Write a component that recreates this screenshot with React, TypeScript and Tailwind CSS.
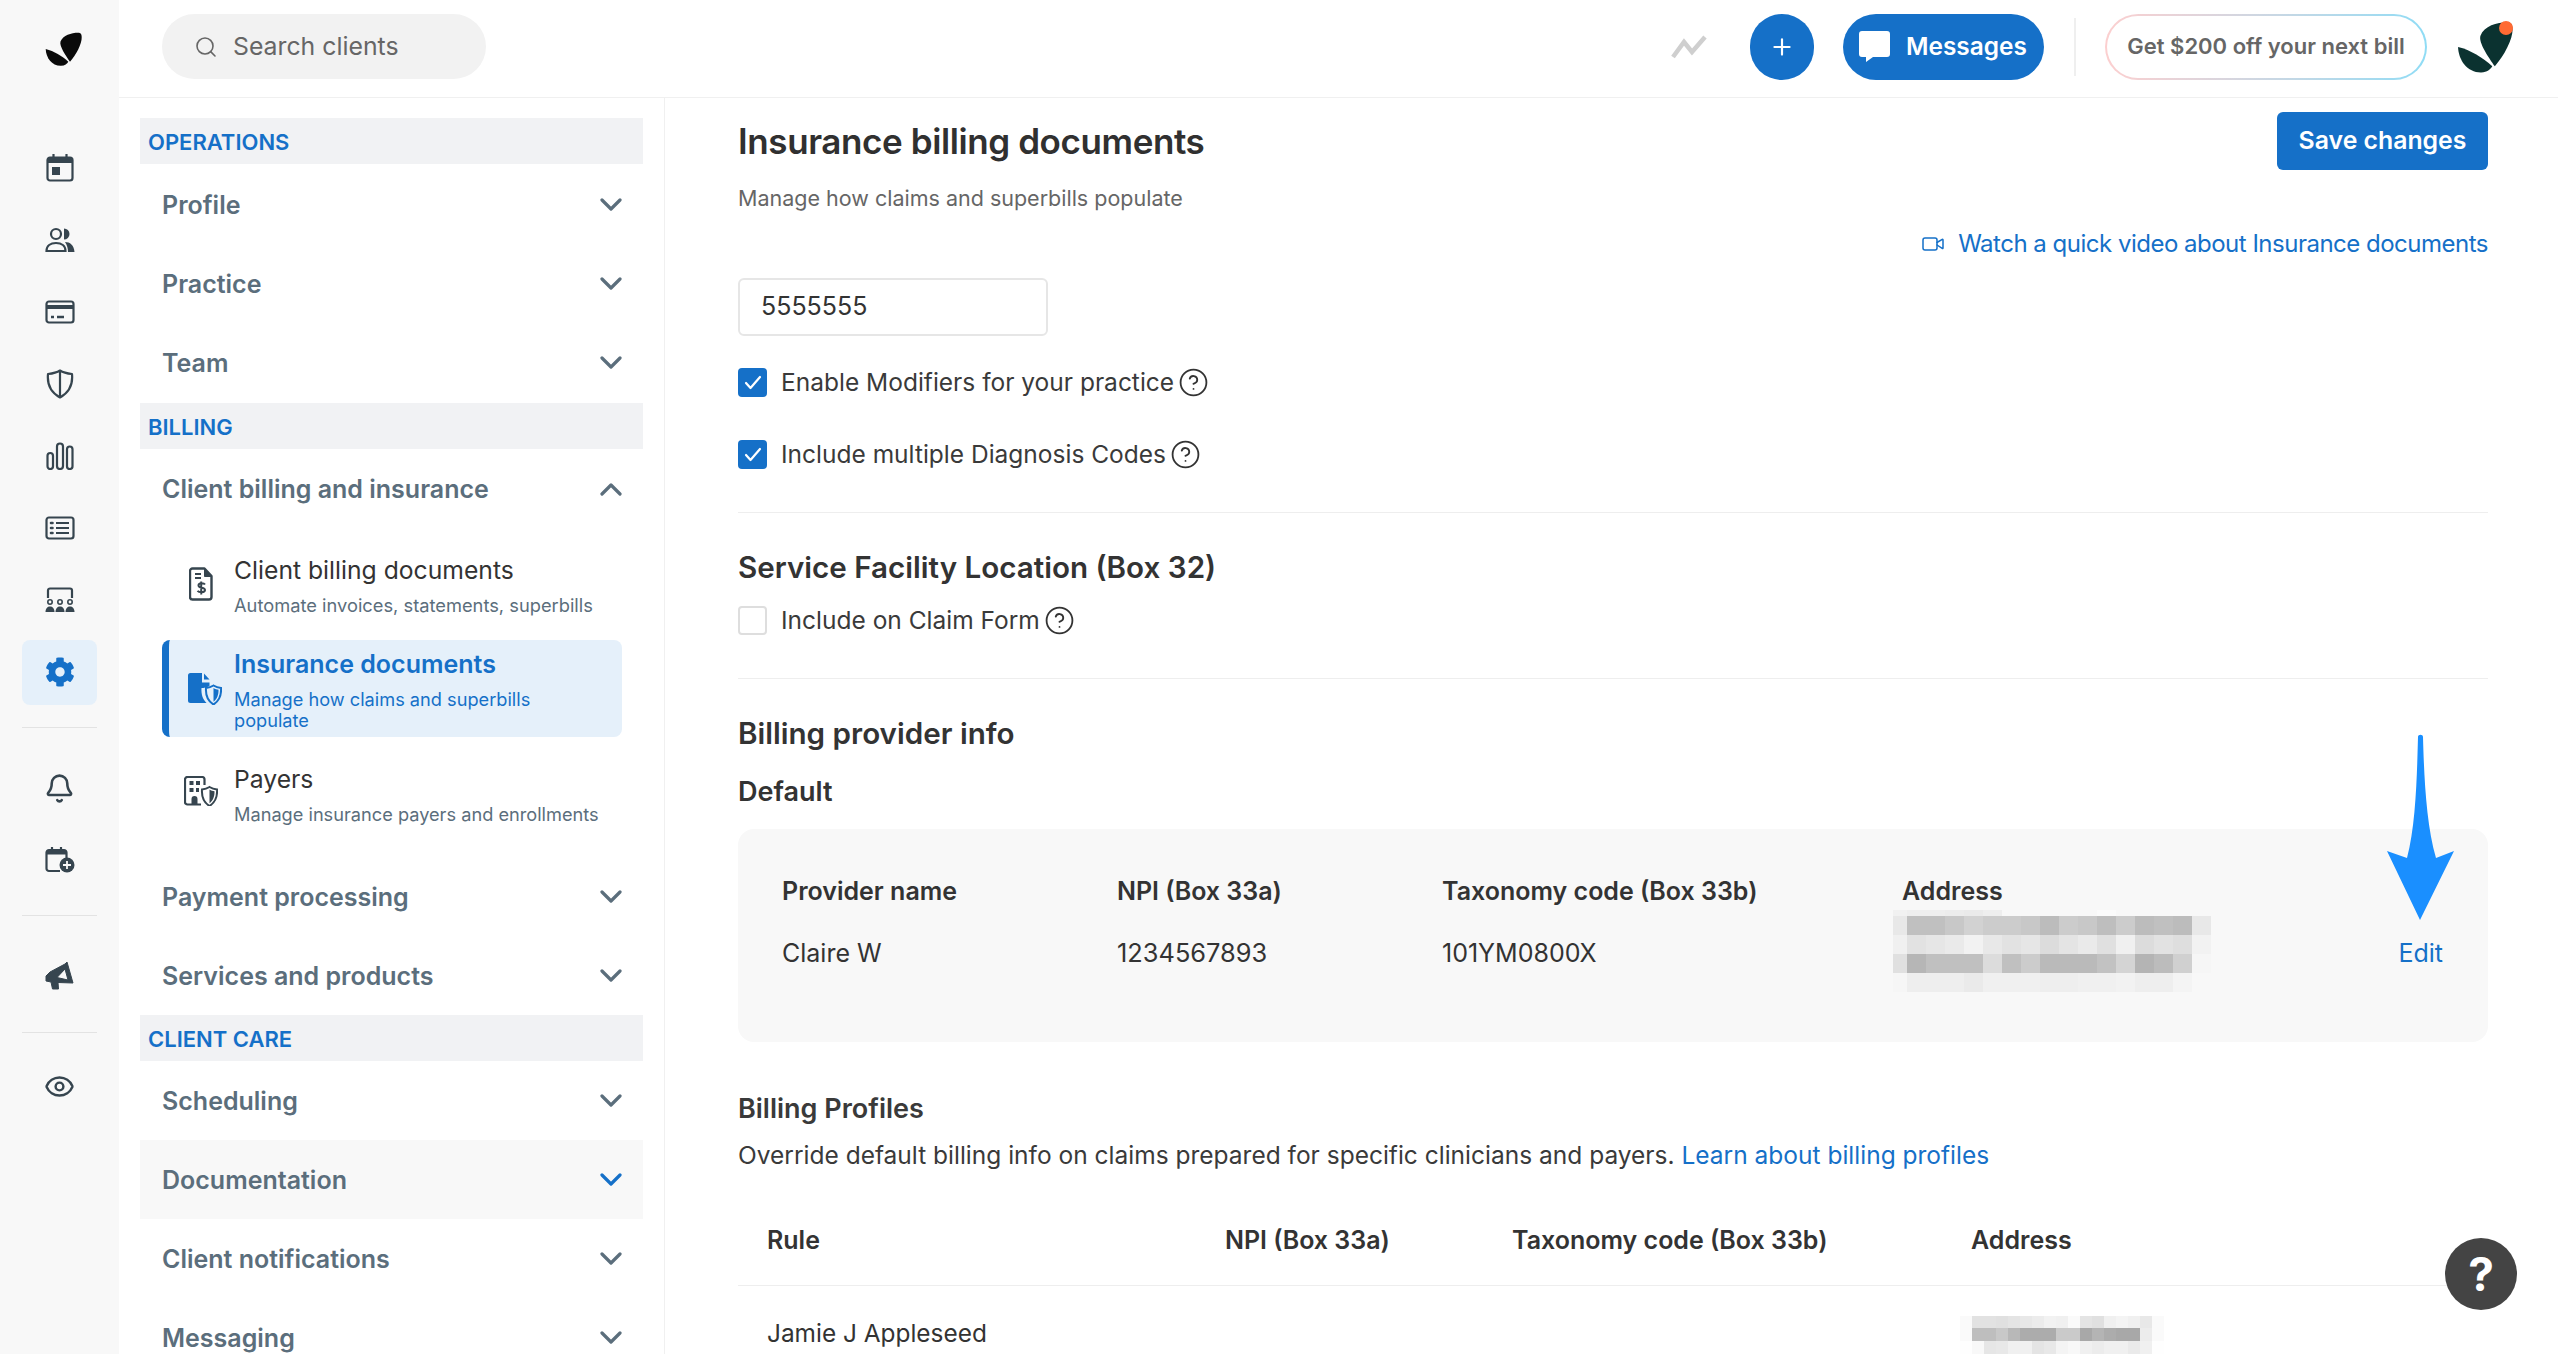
import { Bell, CircleHelp, Eye, Plus, Search, Video } from "lucide-react";
import { FaCog } from "react-icons/fa";

const INK = "#36454f";

function Chevron({ up, blue }: { up?: boolean; blue?: boolean }) {
  return (
    <svg width="22" height="14" viewBox="0 0 22 14" fill="none" stroke={blue ? "#1570c8" : "#5b6e7c"} strokeWidth="3.2" strokeLinecap="round" strokeLinejoin="round">
      <polyline points={up ? "2,12 11,3 20,12" : "2,2 11,11 20,2"} />
    </svg>
  );
}

function Logo({ color, width, height }: { color: string; width: number; height: number }) {
  return (
    <svg width={width} height={height} viewBox="0 0 37 34" fill={color}>
      <path d="M34 .7C27 .5 18 3 15.500 9.500 14 14 21 24 25 29.700 31 23 37 12 36.700 5 36.600 2.500 36 1 34 .7Z" />
      <path d="M.7 17C9 19 17 24 23.300 29.700 22 32 20 33.500 16 33.800 7 34 1 26 .7 17Z" />
    </svg>
  );
}

function CalendarIcon() {
  return (
    <svg width="28" height="28" viewBox="0 0 28 28" fill="none" stroke={INK} strokeWidth="2.2">
      <rect x="1.5" y="3.5" width="25" height="23" rx="2.5" />
      <rect x="2" y="4" width="24" height="5" fill={INK} stroke="none" />
      <path d="M7.5 0.5v4M20.5 0.5v4" strokeLinecap="round" />
      <rect x="6" y="13" width="8" height="8" fill={INK} stroke="none" />
    </svg>
  );
}

function PeopleIcon() {
  return (
    <svg width="30" height="26" viewBox="0 0 30 26" fill="none" stroke={INK} strokeWidth="2.2">
      <circle cx="11" cy="7" r="5" />
      <path d="M1.5 24c0-5 4-8 9.500-8s9.500 3 9.500 8Z" />
      <path d="M19 1.500a5.500 5.500 0 0 1 0 11Z" fill={INK} stroke="none" />
      <path d="M20 15c5 0 9 3 9.500 10H23c0-4-1-7-3-10Z" fill={INK} stroke="none" />
    </svg>
  );
}

function CardIcon() {
  return (
    <svg width="30" height="24" viewBox="0 0 30 24" fill="none" stroke={INK} strokeWidth="2.2">
      <rect x="1.500" y="1.500" width="27" height="21" rx="2.500" />
      <rect x="2" y="5" width="26" height="4" fill={INK} stroke="none" />
      <path d="M6 17h3M12 17h7" strokeWidth="2.400" />
    </svg>
  );
}

function ShieldIcon() {
  return (
    <svg width="28" height="30" viewBox="0 0 28 30" fill="none" stroke={INK} strokeWidth="2.200" strokeLinejoin="round">
      <path d="M14 1.500c3 2 7 3 12 3.500 1 10-2 18-12 23.500C4 23 1 15 2 5c5-.5 9-1.500 12-3.500Z" />
      <path d="M14 2v26" />
    </svg>
  );
}

function BarsIcon() {
  return (
    <svg width="28" height="28" viewBox="0 0 28 28" fill="none" stroke={INK} strokeWidth="2.200">
      <rect x="1.500" y="11" width="5.500" height="16" rx="2.700" />
      <rect x="11" y="1.500" width="6" height="25.500" rx="3" />
      <rect x="21" y="4.500" width="5.500" height="22.500" rx="2.700" />
    </svg>
  );
}

function ListIcon() {
  return (
    <svg width="30" height="24" viewBox="0 0 30 24" fill="none" stroke={INK} strokeWidth="2.200">
      <rect x="1.500" y="1.500" width="27" height="21" rx="2.500" />
      <path d="M11 7h13M11 12h13M11 17h13" />
      <path d="M6 7h1.500M6 12h1.500M6 17h1.500" strokeWidth="2.600" strokeLinecap="round" />
    </svg>
  );
}

function OrgIcon() {
  return (
    <svg width="30" height="26" viewBox="0 0 30 26" fill={INK}>
      <path d="M3 11V3.500A2 2 0 0 1 5 1.500h20a2 2 0 0 1 2 2V11" fill="none" stroke={INK} strokeWidth="2.200" />
      <circle cx="5" cy="15" r="2.200" fill="none" stroke={INK} strokeWidth="1.600" />
      <circle cx="15" cy="15" r="2.200" fill="none" stroke={INK} strokeWidth="1.600" />
      <circle cx="25" cy="15" r="2.200" fill="none" stroke={INK} strokeWidth="1.600" />
      <path d="M0.500 25c0-3.500 2-5.500 4.500-5.500s4.500 2 4.500 5.500Z" />
      <path d="M10.500 25c0-3.500 2-5.500 4.500-5.500s4.500 2 4.500 5.500Z" />
      <path d="M20.500 25c0-3.500 2-5.500 4.500-5.500s4.500 2 4.500 5.500Z" />
    </svg>
  );
}

function CalendarPlusIcon() {
  return (
    <svg width="30" height="26" viewBox="0 0 30 26" fill="none" stroke={INK} strokeWidth="2.200">
      <path d="M15 24H4a2.500 2.500 0 0 1-2.500-2.500V5.500A2.500 2.500 0 0 1 4 3h15a2.500 2.500 0 0 1 2.500 2.500V11" />
      <rect x="2" y="3.500" width="19" height="4" fill={INK} stroke="none" />
      <path d="M7 .5v3M16 .5v3" strokeLinecap="round" />
      <circle cx="22" cy="18" r="7.500" fill={INK} stroke="none" />
      <path d="M22 14v8M18 18h8" stroke="#f8f8f8" strokeWidth="1.800" />
    </svg>
  );
}

function MegaphoneIcon() {
  return (
    <svg width="30" height="32" viewBox="0 0 30 32" fill={INK} stroke={INK} strokeWidth="1" strokeLinejoin="round">
      <path fillRule="evenodd" d="M1 17 5 13 20 5 22 3 28 24 13 23.500 13.500 30H7.500L6 23 1 22ZM12 18.500 23 21 20 10Z" />
    </svg>
  );
}

function FileDollarIcon() {
  return (
    <svg width="24" height="34" viewBox="0 0 24 34" fill="none" stroke={INK} strokeWidth="2.400" strokeLinejoin="round">
      <path d="M3.500 1.500h12l7 7.500v21a2.500 2.500 0 0 1-2.500 2.500H3.500A2.500 2.500 0 0 1 1 30V4a2.500 2.500 0 0 1 2.500-2.500Z" />
      <path d="M15.500 2v7.500h6.500" fill={INK} strokeWidth="1" />
      <path d="M6 7h6M6 11h6" strokeWidth="2" />
      <path d="M16 17.500c-1-1.500-6.500-2-6.500 1 0 3 6.500 1.500 6.500 4.500 0 3-6 2.500-7.500.8M12.200 14.500v13" strokeWidth="2" />
    </svg>
  );
}

function InsuranceFileIcon() {
  return (
    <svg width="34" height="32" viewBox="0 0 34 32" fill="#1570c8">
      <path d="M2.500 0H14v9.500h7.500v3.500c-3 1.500-5.500 2-8 2-.5 6.500 1.500 11.500 5 15H2.500A2.500 2.500 0 0 1 0 27.500V2.500A2.500 2.500 0 0 1 2.500 0Z" />
      <path d="M16 0.500l5.500 6H16Z" />
      <path d="M25.500 12.500c2.500 1.500 5 2.200 7.500 2.500.5 7-2 13-7.500 16.500-5.500-3.500-8-9.500-7.500-16.500 2.500-.3 5-1 7.500-2.500Z" fill="none" stroke="#1570c8" strokeWidth="2" />
      <path d="M25.500 15c1.500 1 3.500 1.500 5 1.800.2 5-1.500 9.500-5 12Z" />
    </svg>
  );
}

function PayersIcon() {
  return (
    <svg width="34" height="30" viewBox="0 0 34 30" fill="none">
      <path d="M17 28.500H3.500A2.500 2.500 0 0 1 1 26V3.500A2.500 2.500 0 0 1 3.500 1H18a2.500 2.500 0 0 1 2.500 2.500V9" stroke={INK} strokeWidth="2.200" />
      <path d="M5.500 5h4v4h-4ZM12 5h4v4h-4ZM5.500 12h4v4h-4ZM12 12h3v4h-3ZM7.500 29v-6a3 3 0 0 1 6 0v6Z" fill={INK} />
      <path d="M25.500 11c2.500 1.500 5 2.200 7.500 2.500.5 7-2 13-7.500 16.500-5.500-3.500-8-9.500-7.500-16.500 2.500-.3 5-1 7.500-2.500Z" fill="#fff" stroke={INK} strokeWidth="2" />
      <path d="M25.500 13.500c1.500 1 3.500 1.500 5 1.800.2 5-1.500 9.500-5 12Z" fill={INK} />
    </svg>
  );
}

function RailItem({ children, active }: { children: React.ReactNode; active?: boolean }) {
  return (
    <div className="flex h-[72px] w-full items-center justify-center">
      <div className={`flex h-[65px] w-[75px] items-center justify-center rounded-[8px] ${active ? "bg-[#e5f0fa]" : ""}`}>{children}</div>
    </div>
  );
}

function RailDivider({ className }: { className: string }) {
  return <div className={`mx-auto h-px w-[75px] bg-[#e3e3e3] ${className}`} />;
}

function SectionBand({ label }: { label: string }) {
  return (
    <div className="flex h-[46px] items-center bg-[#f1f2f4] pl-[8px] pt-[3px] text-[22px] font-semibold text-[#1570c8]">{label}</div>
  );
}

function NavRow({ label, up, tinted }: { label: string; up?: boolean; tinted?: boolean }) {
  return (
    <div className={`flex h-[79px] items-center justify-between pl-[22px] pr-[21px] ${tinted ? "bg-[#f8f8f8]" : ""}`}>
      <span className="pt-[2px] text-[25px] font-semibold text-[#5b6e7c]">{label}</span>
      <Chevron up={up} blue={tinted} />
    </div>
  );
}

function Blur({ cells, first, cell, rowHeights }: { cells: string[][]; first: number; cell: number; rowHeights: number[] }) {
  let y = 0;
  const width = first + cell * (cells[0].length - 1);
  const height = rowHeights.reduce((a, b) => a + b, 0);
  return (
    <svg width={width} height={height} className="block">
      {cells.map((row, r) => {
        const top = y;
        y += rowHeights[r];
        return row.map((c, i) => (
          <rect key={`${r}-${i}`} x={i === 0 ? 0 : first + (i - 1) * cell} y={top} width={i === 0 ? first : cell} height={rowHeights[r]} fill={`#${c}${c}${c}`} />
        ));
      })}
    </svg>
  );
}

const BLUR_A = [
  ["f1", "ee", "ee", "ec", "ea", "ee", "f8", "f8", "f8", "f8", "f8", "fb", "f8", "f8", "f8", "f8", "f8", "f8"],
  ["e8", "c0", "c0", "c8", "d2", "cc", "cc", "c8", "bc", "cc", "c8", "be", "cc", "bc", "c0", "bc", "e8", "f8"],
  ["f0", "e2", "e6", "ea", "f2", "e8", "e2", "e6", "dc", "e4", "ea", "e0", "f0", "dc", "e2", "de", "f2", "f8"],
  ["e0", "b6", "c0", "c0", "c0", "dc", "c0", "cc", "ba", "ba", "ba", "c2", "d4", "b4", "bc", "d0", "f6", "f8"],
  ["f6", "ee", "ee", "ee", "ea", "f0", "f0", "f0", "ee", "ee", "f0", "f0", "f2", "ee", "ee", "f4", "f8", "f8"],
];

const BLUR_B = [
  ["fa", "e2", "e2", "e0", "e4", "e8", "ec", "f2", "f0", "fa", "e4", "e0", "f0", "f4", "f0", "e8", "fa"],
  ["fa", "be", "be", "c8", "b8", "ac", "ac", "ac", "ca", "ca", "a8", "b4", "ac", "a8", "a8", "ec", "fa"],
  ["fe", "f8", "e6", "e8", "f0", "f0", "e4", "e8", "f4", "f8", "f0", "ec", "f0", "f0", "ea", "f0", "fe"],
];

function CheckRow({ label, checked, className }: { label: string; checked?: boolean; className: string }) {
  return (
    <div className={`flex h-[29px] items-center ${className}`}>
      {checked ? (
        <span className="flex h-[29px] w-[29px] items-center justify-center rounded-[4px] bg-[#1570c8]">
          <svg width="18" height="15" viewBox="0 0 18 15" fill="none" stroke="#fff" strokeWidth="2.200" strokeLinecap="round" strokeLinejoin="round">
            <polyline points="2,8 6.500,13 16,2" />
          </svg>
        </span>
      ) : (
        <span className="h-[29px] w-[29px] rounded-[4px] border-2 border-[#dedede] bg-white" />
      )}
      <span className="ml-[14px] text-[24.5px] text-[#3a3a3a]">{label}</span>
      <CircleHelp size={31} strokeWidth={1.4} className="ml-[4px] text-[#333]" />
    </div>
  );
}

function CardColumn({ width, title, children }: { width?: string; title: string; children: React.ReactNode }) {
  return (
    <div className={width}>
      <div className="h-[34px] text-[25px] leading-[34px] font-semibold text-[#333]">{title}</div>
      {children}
    </div>
  );
}

export default function App() {
  return (
    <div className="flex h-screen overflow-hidden bg-white font-[Inter,sans-serif] text-[#333]">
      {/* icon rail */}
      <aside className="w-[119px] shrink-0 bg-[#f8f8f8]">
        <div className="flex h-[98px] items-center justify-center pl-[7px]">
          <Logo color="#0a0a0a" width={37} height={34} />
        </div>
        <div className="mt-[34px]">
          <RailItem><CalendarIcon /></RailItem>
          <RailItem><PeopleIcon /></RailItem>
          <RailItem><CardIcon /></RailItem>
          <RailItem><ShieldIcon /></RailItem>
          <RailItem><BarsIcon /></RailItem>
          <RailItem><ListIcon /></RailItem>
          <RailItem><OrgIcon /></RailItem>
          <RailItem active><FaCog size={30} color="#1570c8" /></RailItem>
        </div>
        <RailDivider className="mt-[19px]" />
        <div className="mt-[24px]">
          <RailItem><Bell size={31} strokeWidth={2} color={INK} /></RailItem>
          <RailItem><CalendarPlusIcon /></RailItem>
        </div>
        <RailDivider className="mt-[19px]" />
        <div className="mt-[23px]">
          <RailItem><MegaphoneIcon /></RailItem>
        </div>
        <RailDivider className="mt-[21px]" />
        <div className="mt-[17px]">
          <RailItem><Eye size={31} strokeWidth={1.9} color={INK} /></RailItem>
        </div>
      </aside>

      <div className="flex min-w-0 flex-1 flex-col">
        {/* top bar */}
        <header className="flex h-[98px] shrink-0 items-center justify-between border-b border-[#f0f0f0] pb-[4px] pl-[43px] pr-[45px]">
          <div className="flex h-[65px] w-[324px] items-center rounded-full bg-[#f2f2f2] pl-[32px] text-[24.8px] text-[#666]">
            <Search size={24} strokeWidth={1.6} />
            <span className="ml-[15px]">Search clients</span>
          </div>
          <div className="flex items-center">
            <svg width="36" height="26" viewBox="0 0 36 26" fill="none" stroke="#cfcfcf" strokeWidth="4.500" strokeLinejoin="miter">
              <polyline points="2,23 13,8 21,18 34,3" />
            </svg>
            <div className="ml-[43px] flex h-[66px] w-[64px] items-center justify-center rounded-full bg-[#1570c8]">
              <Plus size={26} strokeWidth={2} color="#fff" />
            </div>
            <div className="ml-[29px] flex h-[66px] w-[201px] items-center rounded-full bg-[#1570c8] pl-[16px] text-[24.4px] font-semibold text-white">
              <svg width="31" height="31" viewBox="0 0 31 31" fill="#fff">
                <path d="M3 0h25a3 3 0 0 1 3 3v20a3 3 0 0 1-3 3H14l-7 5v-5H3a3 3 0 0 1-3-3V3a3 3 0 0 1 3-3Z" />
              </svg>
              <span className="ml-[16px]">Messages</span>
            </div>
            <div className="ml-[30px] h-[58px] w-[2px] bg-[#efefef]" />
            <div className="ml-[29px] h-[66px] w-[322px] rounded-full bg-linear-to-r from-[#fccfcf] to-[#8fdcf5] p-[2px]">
              <div className="flex h-full items-center justify-center rounded-full bg-white text-[22px] font-semibold text-[#666]">Get $200 off your next bill</div>
            </div>
            <div className="relative ml-[30px] flex h-[56px] w-[56px] items-center justify-center">
              <Logo color="#0b3230" width={56} height={52} />
              <span className="absolute right-0 top-[2px] h-[14px] w-[14px] rounded-full bg-[#ff6a33]" />
            </div>
          </div>
        </header>

        <div className="flex min-h-0 flex-1">
          {/* settings nav */}
          <nav className="w-[546px] shrink-0 overflow-hidden border-r border-[#f0f0f0] pl-[21px] pr-[21px] pt-[20px]">
            <div className="pb-px"><SectionBand label="OPERATIONS" /></div>
            <NavRow label="Profile" />
            <NavRow label="Practice" />
            <NavRow label="Team" />
            <div className="mt-px"><SectionBand label="BILLING" /></div>
            <NavRow label="Client billing and insurance" up />
            <div className="ml-[22px] mr-[21px]">
              <div className="flex h-[112px] pt-[25px]">
                <div className="flex w-[72px] justify-center pl-[6px] pt-[14px]"><FileDollarIcon /></div>
                <div>
                  <div className="text-[24.7px] leading-[34px] text-[#333]">Client billing documents</div>
                  <div className="mt-[8px] text-[18.3px] leading-[20px] text-[#5b6e7c]">Automate invoices, statements, superbills</div>
                </div>
              </div>
              <div className="flex h-[97px] rounded-[8px] border-l-[7px] border-[#1570c8] bg-[#e5f0fa] pt-[7px]">
                <div className="flex w-[65px] justify-center pl-[6px] pt-[26px]"><InsuranceFileIcon /></div>
                <div>
                  <div className="text-[25px] leading-[34px] font-semibold text-[#1570c8]">Insurance documents</div>
                  <div className="mt-[8px] w-[330px] text-[18.2px] leading-[21px] text-[#1570c8]">Manage how claims and superbills populate</div>
                </div>
              </div>
              <div className="flex h-[120px] pt-[25px]">
                <div className="flex w-[72px] justify-center pl-[6px] pt-[14px]"><PayersIcon /></div>
                <div>
                  <div className="text-[24.7px] leading-[34px] text-[#333]">Payers</div>
                  <div className="mt-[8px] text-[18.2px] leading-[20px] text-[#5b6e7c]">Manage insurance payers and enrollments</div>
                </div>
              </div>
            </div>
            <NavRow label="Payment processing" />
            <NavRow label="Services and products" />
            <SectionBand label="CLIENT CARE" />
            <NavRow label="Scheduling" />
            <NavRow label="Documentation" tinted />
            <NavRow label="Client notifications" />
            <NavRow label="Messaging" />
          </nav>

          {/* main */}
          <main className="relative min-w-0 flex-1 overflow-hidden pl-[73px] pr-[70px] pt-[14px]">
            <div className="flex h-[58px] items-center justify-between">
              <h1 className="text-[35px] font-semibold tracking-[-0.4px] text-[#303030]">Insurance billing documents</h1>
              <button className="flex h-[58px] w-[211px] items-center justify-center rounded-[6px] bg-[#1570c8] text-[24.8px] font-semibold text-white">Save changes</button>
            </div>
            <p className="mt-[14px] h-[27px] text-[21.5px] leading-[28px] text-[#666]">Manage how claims and superbills populate</p>
            <div className="mt-[19px] flex h-[28px] items-center justify-end text-[24px] tracking-[-0.5px] text-[#1570c8]">
              <Video size={24} strokeWidth={1.5} />
              <span className="ml-[13px]">Watch a quick video about Insurance documents</span>
            </div>
            <div className="mt-[20px] flex h-[58px] w-[310px] items-center rounded-[6px] border-2 border-[#e6e6e6] pl-[21px] text-[25px] text-[#333]">5555555</div>
            <CheckRow className="mt-[32px]" label="Enable Modifiers for your practice" checked />
            <CheckRow className="mt-[43px]" label="Include multiple Diagnosis Codes" checked />
            <div className="mt-[43px] h-px bg-[#eeeeee]" />
            <h2 className="mt-[36px] h-[36px] text-[29.6px] leading-[36px] font-semibold text-[#333]">Service Facility Location (Box 32)</h2>
            <CheckRow className="mt-[21px]" label="Include on Claim Form" />
            <div className="mt-[43px] h-px bg-[#eeeeee]" />
            <h2 className="mt-[36px] h-[36px] text-[29.6px] leading-[36px] font-semibold text-[#333]">Billing provider info</h2>
            <h3 className="mt-[25px] h-[32px] text-[27px] leading-[32px] font-semibold text-[#333]">Default</h3>

            <div className="mt-[21px] flex h-[213px] rounded-[16px] bg-[#f8f8f8] pl-[44px] pr-[45px] pt-[45px]">
              <CardColumn width="w-[335px]" title="Provider name">
                <div className="mt-[28px] h-[34px] text-[25px] leading-[34px] text-[#333]">Claire W</div>
              </CardColumn>
              <CardColumn width="w-[325px]" title="NPI (Box 33a)">
                <div className="mt-[28px] h-[34px] text-[25.400px] leading-[34px] text-[#333]">1234567893</div>
              </CardColumn>
              <CardColumn width="w-[460px]" title="Taxonomy code (Box 33b)">
                <div className="mt-[28px] h-[34px] text-[25px] leading-[34px] text-[#333]">101YM0800X</div>
              </CardColumn>
              <CardColumn title="Address">
                <div className="-ml-[9px] mt-[2px]">
                  <Blur cells={BLUR_A} first={14} cell={19} rowHeights={[6, 19, 19, 19, 19]} />
                </div>
              </CardColumn>
              <div className="ml-auto mt-[62px] h-[34px] text-[25px] leading-[34px] text-[#1570c8]">Edit</div>
            </div>

            <h3 className="mt-[49px] h-[36px] text-[27px] leading-[36px] font-semibold text-[#3a3a3a]">Billing Profiles</h3>
            <p className="mt-[12px] h-[32px] text-[24.5px] leading-[32px] text-[#3a3a3a]">
              Override default billing info on claims prepared for specific clinicians and payers. <span className="text-[#1570c8]">Learn about billing profiles</span>
            </p>

            <div className="mt-[52px] flex h-[34px] pl-[29px] text-[25px] leading-[34px] font-semibold text-[#333]">
              <div className="w-[458px]">Rule</div>
              <div className="w-[287px]">NPI (Box 33a)</div>
              <div className="w-[459px]">Taxonomy code (Box 33b)</div>
              <div>Address</div>
            </div>
            <div className="mt-[28px] h-px bg-[#eeeeee]" />
            <div className="mt-[30px] flex pl-[29px]">
              <div className="w-[1193px] text-[24.4px] leading-[34px] text-[#333]">Jamie J Appleseed</div>
              <Blur cells={BLUR_B} first={12} cell={12} rowHeights={[12, 13, 13]} />
            </div>

            {/* annotation arrow over the card */}
            <svg className="absolute right-[103px] top-[636px]" width="68" height="186" viewBox="0 0 68 186" fill="#1a8fff">
              <path d="M31 3C31 0 36 0 36 3 37 40 39 90 49 124L67 117 33 186 0 117 20 124C29 90 30 40 31 3Z" />
            </svg>

            {/* help bubble */}
            <div className="absolute right-[41px] top-[1140px] flex h-[72px] w-[72px] items-center justify-center rounded-full bg-[#444] text-[46px] font-bold text-white">?</div>
          </main>
        </div>
      </div>
    </div>
  );
}
